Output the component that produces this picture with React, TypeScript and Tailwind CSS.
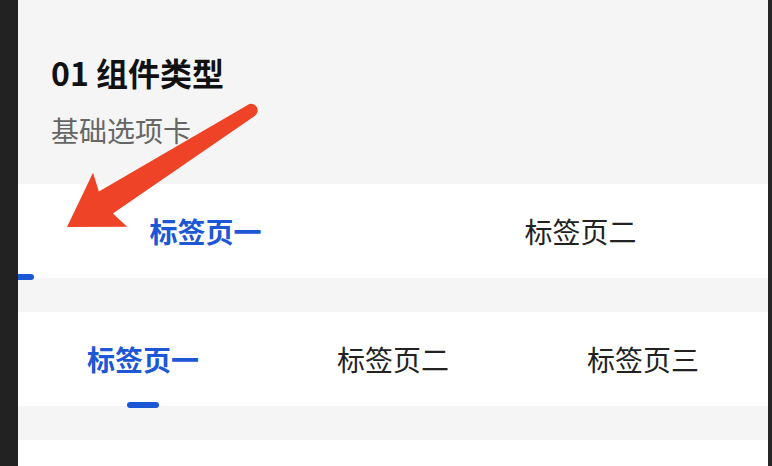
import React from "react";

const font = { fontFamily: '"Noto Sans CJK SC", "Noto Sans", sans-serif' };

function Tab({ label, active }: { label: string; active?: boolean }) {
    return (
        <div className="relative flex flex-1 items-center justify-center">
            <span
                className={
                    active
                        ? "text-[28px] leading-[40px] font-semibold text-[#1c57d6]"
                        : "text-[28px] leading-[40px] text-[#222222]"
                }
            >
                {label}
            </span>
        </div>
    );
}

export default function App() {
    return (
        <div className="relative flex h-[466px] w-[772px] overflow-hidden bg-[#232323]" style={font}>
            <div className="w-[18px] shrink-0 bg-[#222222]" />
            <div className="flex w-[750px] shrink-0 flex-col overflow-hidden bg-[#f5f5f5]">
                <div className="h-[184px] shrink-0 px-[33px] pt-[52px]">
                    <div className="text-[32px] leading-[40px] font-bold text-[#111111]">01 组件类型</div>
                    <div className="mt-[18px] text-[28px] leading-[40px] text-[#666666]">基础选项卡</div>
                </div>

                <div className="relative flex h-[94px] shrink-0 bg-white">
                    <Tab label="标签页一" active />
                    <Tab label="标签页二" />
                    <div className="absolute bottom-[-2px] left-[-16px] h-[6px] w-[32px] rounded-full bg-[#1c57d6]" />
                </div>

                <div className="h-[34px] shrink-0" />

                <div className="relative flex h-[94px] shrink-0 bg-white">
                    <div className="relative flex flex-1 items-center justify-center">
                        <span className="text-[28px] leading-[40px] font-semibold text-[#1c57d6]">标签页一</span>
                        <div className="absolute bottom-[-2px] left-1/2 h-[6px] w-[32px] -translate-x-1/2 rounded-full bg-[#1c57d6]" />
                    </div>
                    <Tab label="标签页二" />
                    <Tab label="标签页三" />
                </div>

                <div className="h-[34px] shrink-0" />

                <div className="flex-1 bg-white" />
            </div>
            <div className="flex-1 bg-[#262626]" />

            {/* annotation arrow */}
            <svg className="pointer-events-none absolute left-0 top-0" width="772" height="466" viewBox="0 0 772 466">
                <path
                    d="M67 227 L127.2 226.7 L112.9 213.4 L254.7 115.9 A6.5 6.5 0 0 0 247.7 104.9 L98.9 191.4 L93 172.7 Z"
                    fill="#ee4326"
                />
            </svg>
        </div>
    );
}
